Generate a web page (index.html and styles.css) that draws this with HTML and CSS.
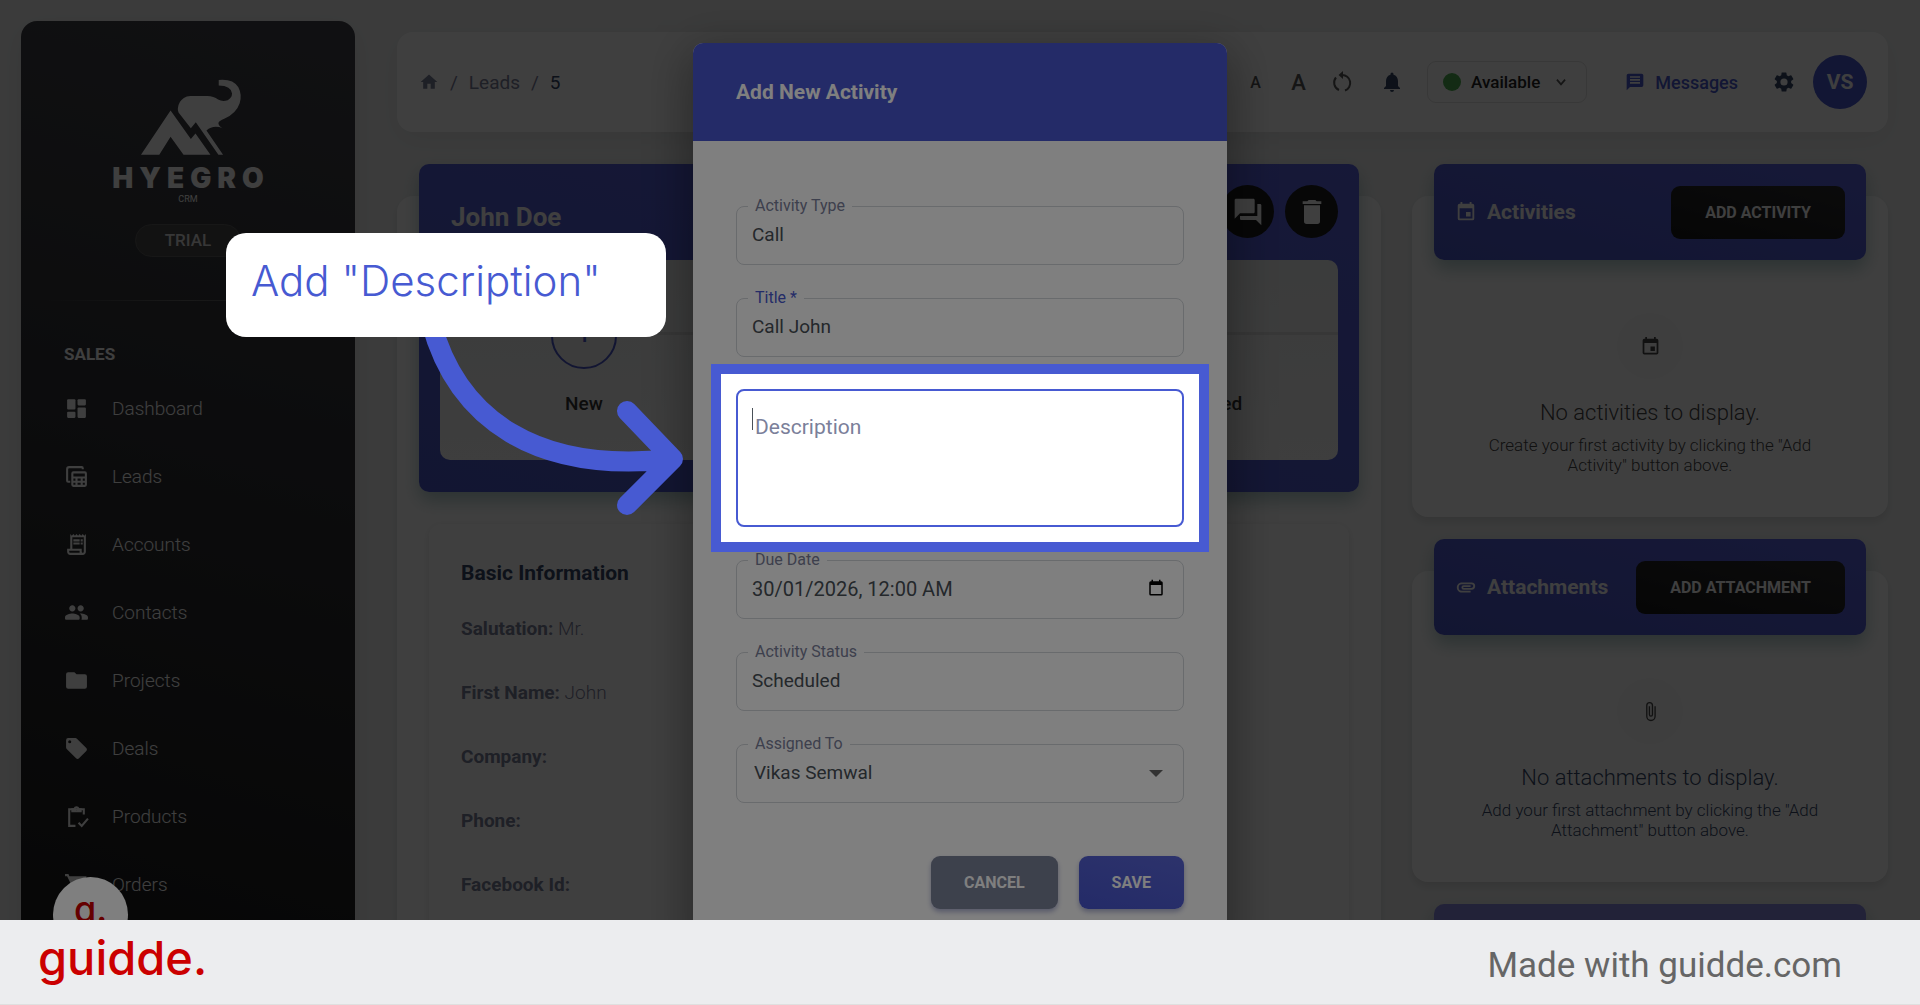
FILE: index.html
```html
<!DOCTYPE html>
<html lang="en">
<head>
  <meta charset="utf-8">
  <title>Add New Activity</title>
  <link rel="stylesheet" href="styles.css">
</head>
<body>
<svg class="sprite" aria-hidden="true">
  <symbol id="i-dashboard" viewBox="0 0 24 24"><rect x="3" y="3" width="8" height="10" rx="1"/><rect x="3" y="15" width="8" height="6" rx="1"/><rect x="13" y="3" width="8" height="6" rx="1"/><rect x="13" y="11" width="8" height="10" rx="1"/></symbol>
  <symbol id="i-table" viewBox="0 0 24 24"><path d="M18 5V4a1 1 0 0 0-1-1H5a2 2 0 0 0-2 2v11a1 1 0 0 0 1 1h2" fill="none" stroke="currentColor" stroke-width="2"/><path fill-rule="evenodd" d="M9 7h11a2 2 0 0 1 2 2v11a2 2 0 0 1-2 2H9a2 2 0 0 1-2-2V9a2 2 0 0 1 2-2zm0 2v3h11V9zm0 5v2h2v-2zm4 0v2h3v-2zm5 0v2h2v-2zM9 18v2h2v-2zm4 0v2h3v-2zm5 0v2h2v-2z"/></symbol>
  <symbol id="i-receipt" viewBox="0 0 24 24"><path d="M19.500 3.500 18 2l-1.500 1.500L15 2l-1.500 1.500L12 2l-1.500 1.500L9 2 7.500 3.500 6 2v14H3v3c0 1.660 1.340 3 3 3h12c1.660 0 3-1.340 3-3V2l-1.500 1.500zM15 20H6c-.55 0-1-.45-1-1v-1h10v2zm4-1c0 .55-.45 1-1 1s-1-.45-1-1v-3H8V5h11v14z"/><path d="M9 7h6v2H9zm7 0h2v2h-2zm-7 3h6v2H9zm7 0h2v2h-2z"/></symbol>
  <symbol id="i-people" viewBox="0 0 24 24"><path d="M16 11c1.660 0 2.990-1.340 2.990-3S17.660 5 16 5s-3 1.340-3 3 1.340 3 3 3zm-8 0c1.660 0 2.990-1.340 2.990-3S9.660 5 8 5 5 6.340 5 8s1.340 3 3 3zm0 2c-2.330 0-7 1.170-7 3.500V18a1 1 0 0 0 1 1h12a1 1 0 0 0 1-1v-1.500C15 14.170 10.330 13 8 13zm8 0c-.29 0-.62.020-.97.050 1.160.84 1.970 1.970 1.970 3.450V18l-.2 1H22a1 1 0 0 0 1-1v-1.500c0-2.330-4.670-3.500-7-3.500z"/></symbol>
  <symbol id="i-folder" viewBox="0 0 24 24"><path d="M10 4H4a2 2 0 0 0-2 2v12a2 2 0 0 0 2 2h16a2 2 0 0 0 2-2V8a2 2 0 0 0-2-2h-8z"/></symbol>
  <symbol id="i-tag" viewBox="0 0 24 24"><path d="m21.400 11.600-9-9C12.050 2.220 11.550 2 11 2H4a2 2 0 0 0-2 2v7c0 .55.220 1.050.590 1.420l9 9c.36.36.86.58 1.410.58s1.050-.22 1.410-.59l7-7c.37-.36.59-.86.59-1.410s-.23-1.060-.6-1.400zM5.500 7a1.500 1.500 0 1 1 0-3 1.500 1.500 0 0 1 0 3z"/></symbol>
  <symbol id="i-clipboard" viewBox="0 0 24 24"><path d="M11 21H5V5h14v5M14 18l3 3 6-7" fill="none" stroke="currentColor" stroke-width="2"/><path fill-rule="evenodd" d="M7 4h2.200a3 3 0 0 1 5.600 0H17v4H7zm5 0a1 1 0 1 0 0 2 1 1 0 0 0 0-2z"/></symbol>
  <symbol id="i-cart" viewBox="0 0 24 24"><path d="M7 18a2 2 0 1 0 0 4 2 2 0 0 0 0-4zM1 2v2h2l3.600 7.590-1.350 2.450C4.520 15.370 5.480 17 7 17h12v-2H7l1.100-2h7.450c.75 0 1.410-.41 1.750-1.030L21.700 4H5.210l-.94-2zm16 16a2 2 0 1 0 0 4 2 2 0 0 0 0-4z"/></symbol>
  <symbol id="i-home" viewBox="0 0 24 24"><path d="M10 20v-6h4v6h5v-8h3L12 3 2 12h3v8z"/></symbol>
  <symbol id="i-reset" viewBox="0 0 24 24"><path d="M9 20A8 8 0 0 1 6 7.500M15 20.500A8 8 0 0 0 12 5" fill="none" stroke="currentColor" stroke-width="2"/><path d="M13 1v8L8.500 5z"/></symbol>
  <symbol id="i-bell" viewBox="0 0 24 24"><path d="M12 22a2 2 0 0 0 2-2h-4a2 2 0 0 0 2 2zm6-6v-5c0-3.070-1.630-5.640-4.500-6.320V4a1.500 1.500 0 0 0-3 0v.68C7.640 5.360 6 7.920 6 11v5l-2 2v1h16v-1z"/></symbol>
  <symbol id="i-chevron" viewBox="0 0 24 24"><path d="m5 8 7 8 7-8" fill="none" stroke="currentColor" stroke-width="3"/></symbol>
  <symbol id="i-message" viewBox="0 0 24 24"><path fill-rule="evenodd" d="M20 2H4a2 2 0 0 0-2 2v18l4-4h14a2 2 0 0 0 2-2V4a2 2 0 0 0-2-2zM6 5h12v2H6zm0 3.500h12v2H6zM6 12h12v2H6z"/></symbol>
  <symbol id="i-gear" viewBox="0 0 24 24"><path d="M19.140 12.940c.04-.3.060-.61.060-.94 0-.32-.02-.64-.07-.94l2.030-1.580a.49.490 0 0 0 .12-.61l-1.920-3.320a.49.490 0 0 0-.59-.22l-2.390.960c-.5-.38-1.030-.7-1.620-.94l-.36-2.540a.48.480 0 0 0-.48-.41h-3.840c-.24 0-.43.170-.47.410l-.36 2.540c-.59.240-1.130.570-1.620.940l-2.390-.96c-.22-.08-.47 0-.59.220L2.740 8.870c-.12.210-.08.470.120.610l2.030 1.580c-.05.300-.09.630-.09.940s.02.640.070.940l-2.030 1.580a.49.490 0 0 0-.12.610l1.920 3.320c.12.220.370.290.590.220l2.390-.96c.5.380 1.030.700 1.620.940l.36 2.540c.05.240.240.410.480.410h3.840c.24 0 .44-.17.470-.41l.36-2.540c.59-.24 1.130-.56 1.620-.94l2.390.960c.22.080.470 0 .59-.22l1.920-3.320c.12-.22.070-.47-.12-.61zM12 15.600A3.600 3.600 0 1 1 12 8.400a3.600 3.600 0 0 1 0 7.200z"/></symbol>
  <symbol id="i-chat" viewBox="0 0 24 24"><path d="M21 6h-2v9H6v2c0 .55.450 1 1 1h11l4 4V7c0-.55-.45-1-1-1zm-4 6V3c0-.55-.45-1-1-1H3c-.55 0-1 .45-1 1v14l4-4h10c.55 0 1-.45 1-1z"/></symbol>
  <symbol id="i-trash" viewBox="0 0 24 24"><path d="M6 19a2 2 0 0 0 2 2h8a2 2 0 0 0 2-2V7H6zM19 4h-3.500l-1-1h-5l-1 1H5v2h14z"/></symbol>
  <symbol id="i-event" viewBox="0 0 24 24"><path d="M17 12h-5v5h5zM16 1v2H8V1H6v2H5a2 2 0 0 0-2 2v14a2 2 0 0 0 2 2h14a2 2 0 0 0 2-2V5a2 2 0 0 0-2-2h-1V1zm3 18H5V8h14z"/></symbol>
  <symbol id="i-clip" viewBox="0 0 24 24"><path d="M16.500 6v11.500a4 4 0 0 1-8 0V5a2.500 2.500 0 0 1 5 0v10.500a1 1 0 0 1-2 0V6H10v9.500a2.500 2.500 0 0 0 5 0V5a4 4 0 0 0-8 0v12.500a5.500 5.500 0 0 0 11 0V6z"/></symbol>
  <symbol id="i-clip-flat" viewBox="0 0 24 24"><path d="M2 12.500C2 9.460 4.460 7 7.500 7H18a4 4 0 0 1 0 8H9.500a2.500 2.500 0 0 1 0-5H17v2H9.410c-.55 0-.55 1 0 1H18a2 2 0 0 0 0-4H7.500a3.500 3.500 0 0 0 0 7H17v2H7.500C4.460 18 2 15.540 2 12.500z"/></symbol>
  <symbol id="i-calendar" viewBox="0 0 24 24"><path fill-rule="evenodd" d="M19 3h-1V1h-2v2H8V1H6v2H5a2 2 0 0 0-2 2v15a2 2 0 0 0 2 2h14a2 2 0 0 0 2-2V5a2 2 0 0 0-2-2zM5 8h14v12H5z"/></symbol>
</svg>

<div class="stage">
  <div class="app">
    <aside class="sidebar">
      <div class="brand">
        <svg class="brand-mark" viewBox="420 235 310 233"><path d="M423 465 512 332 573 418 587 401 632 465H551L512 411 478 465z"/><path d="M534 325Q536 304 552 294 560 288 572 288H622Q642 288 655 299 668 306 684 301 697 294 697 281 695 258 657 257V240Q700 236 716 262 728 285 720 310 710 340 675 356 656 364 656 370 657 379 669 385 640 374 620 392L670 465H656L588 367 573 385 536 338Q533 332 534 325z"/></svg>
        <div class="brand-name">HYEGRO</div>
        <div class="brand-sub">CRM</div>
      </div>
      <div class="plan">TRIAL</div>
      <hr class="side-line">
      <h2 class="side-title">SALES</h2>
      <nav class="side-nav">
        <a href="#"><svg><use href="#i-dashboard"/></svg>Dashboard</a>
        <a href="#"><svg><use href="#i-table"/></svg>Leads</a>
        <a href="#"><svg><use href="#i-receipt"/></svg>Accounts</a>
        <a href="#"><svg><use href="#i-people"/></svg>Contacts</a>
        <a href="#"><svg><use href="#i-folder"/></svg>Projects</a>
        <a href="#"><svg><use href="#i-tag"/></svg>Deals</a>
        <a href="#"><svg><use href="#i-clipboard"/></svg>Products</a>
        <a href="#"><svg><use href="#i-cart"/></svg>Orders</a>
      </nav>
    </aside>

    <main class="main">
      <header class="navbar">
        <nav class="crumbs">
          <a href="#" aria-label="Home"><svg><use href="#i-home"/></svg></a>
          <span>/</span>
          <a href="#">Leads</a>
          <span>/</span>
          <span class="crumb-current">5</span>
        </nav>
        <div class="tools">
          <button class="tool font-small">A</button>
          <button class="tool font-large">A</button>
          <button class="tool" aria-label="Reset"><svg><use href="#i-reset"/></svg></button>
          <button class="tool bell" aria-label="Notifications"><svg><use href="#i-bell"/></svg></button>
          <button class="status"><i class="dot"></i>Available<svg><use href="#i-chevron"/></svg></button>
          <a class="messages" href="#"><svg><use href="#i-message"/></svg>Messages</a>
          <button class="tool gear" aria-label="Settings"><svg><use href="#i-gear"/></svg></button>
          <span class="avatar">VS</span>
        </div>
      </header>

      <div class="columns">
        <section class="panel lead">
          <div class="lead-head">
            <div class="lead-top">
              <h1>John Doe</h1>
              <button class="round" aria-label="Comments"><svg><use href="#i-chat"/></svg></button>
              <button class="round" aria-label="Delete"><svg><use href="#i-trash"/></svg></button>
            </div>
            <ol class="steps">
              <li><b>1</b>New</li>
              <li><b>2</b>Qualified</li>
              <li><b>3</b>Unqualified</li>
            </ol>
          </div>
          <div class="info">
            <h2>Basic Information</h2>
            <p><b>Salutation:</b> Mr.</p>
            <p><b>First Name:</b> John</p>
            <p><b>Company:</b></p>
            <p><b>Phone:</b></p>
            <p><b>Facebook Id:</b></p>
          </div>
        </section>

        <div class="side-col">
          <section class="panel">
            <div class="panel-head">
              <svg><use href="#i-event"/></svg>
              <h2>Activities</h2>
              <button class="dark-btn">ADD ACTIVITY</button>
            </div>
            <div class="empty empty-tall">
              <span class="empty-icon"><svg><use href="#i-event"/></svg></span>
              <h3>No activities to display.</h3>
              <p>Create your first activity by clicking the "Add Activity" button above.</p>
            </div>
          </section>
          <section class="panel">
            <div class="panel-head">
              <svg><use href="#i-clip-flat"/></svg>
              <h2>Attachments</h2>
              <button class="dark-btn">ADD ATTACHMENT</button>
            </div>
            <div class="empty empty-navy">
              <span class="empty-icon"><svg><use href="#i-clip"/></svg></span>
              <h3>No attachments to display.</h3>
              <p>Add your first attachment by clicking the "Add Attachment" button above.</p>
            </div>
          </section>
          <section class="panel">
            <div class="panel-head panel-head-light"></div>
          </section>
        </div>
      </div>
    </main>
  </div>

  <div class="backdrop"></div>
  <div class="bubble">g.</div>

  <div class="modal-wrap">
    <div class="modal" role="dialog" aria-labelledby="modalTitle">
      <h2 class="modal-head" id="modalTitle">Add New Activity</h2>
      <form class="form">
        <fieldset class="field">
          <legend><label for="type">Activity Type</label></legend>
          <input id="type" type="text" value="Call">
        </fieldset>
        <fieldset class="field">
          <legend><label class="active" for="title">Title *</label></legend>
          <input id="title" type="text" value="Call John">
        </fieldset>
        <div class="desc">
          <textarea id="description"></textarea>
          <label for="description">Description</label>
          <i class="caret"></i>
          <div class="spotlight"></div>
        </div>
        <fieldset class="field date">
          <legend><label for="due">Due Date</label></legend>
          <input id="due" type="text" value="30/01/2026, 12:00 AM">
          <svg><use href="#i-calendar"/></svg>
        </fieldset>
        <fieldset class="field">
          <legend><label for="status">Activity Status</label></legend>
          <input id="status" type="text" value="Scheduled">
        </fieldset>
        <fieldset class="field assigned">
          <legend><label for="assigned">Assigned To</label></legend>
          <select id="assigned"><option>Vikas Semwal</option></select>
          <svg viewBox="0 0 14 7"><path d="M0 0h14L7 7z"/></svg>
        </fieldset>
        <div class="actions">
          <button type="button" class="btn btn-cancel">CANCEL</button>
          <button type="button" class="btn btn-save">SAVE</button>
        </div>
      </form>
    </div>
  </div>

  <!-- curved pointer from the callout to the highlighted field -->
  <svg class="arrow" viewBox="420 320 280 210"><path d="M431 322C457 420 537 474 672 459M627 411 673 459 627 505"/></svg>
  <div class="callout">Add "Description"</div>
</div>

<footer class="footer">
  <a class="logo" href="#">guidde.</a>
  <span class="made">Made with guidde.com</span>
</footer>
</body>
</html>
```

FILE: styles.css
```css
* {
  box-sizing: border-box;
}
body {
  margin: 0;
  height: 100vh;
  display: flex;
  flex-direction: column;
  overflow: hidden;
  font-family: Roboto, "Liberation Sans", sans-serif;
  color: #344767;
}
h1, h2, h3, p, ol, fieldset {
  margin: 0;
  padding: 0;
}
button, input, select, textarea {
  font-family: inherit;
  border: 0;
  padding: 0;
  background: none;
}
a {
  color: inherit;
  text-decoration: none;
}
svg {
  fill: currentColor;
  flex-shrink: 0;
}
.sprite {
  display: none;
}
.stage {
  position: relative;
  flex: 1;
  min-height: 0;
  overflow: hidden;
  background: #eeefef;
}
.app {
  display: flex;
  gap: 42px;
  padding: 21px 32px 0 21px;
}

/* sidebar */
.sidebar {
  width: 334px;
  flex-shrink: 0;
  height: 1100px;
  border-radius: 16px;
  background: linear-gradient(195deg, #42434a, #191919 90%);
  color: #fff;
  display: flex;
  flex-direction: column;
  box-shadow: 0 8px 28px rgba(0, 0, 0, 0.08);
}
.brand {
  margin-top: 57px;
  display: flex;
  flex-direction: column;
  align-items: center;
}
.brand-mark {
  width: 103px;
  height: 78px;
  margin-left: 6px;
}
.brand-name {
  margin-top: 6px;
  padding-left: 6px;
  font: 900 28px/32px Inter, sans-serif;
  letter-spacing: 6px;
}
.brand-sub {
  font-size: 9px;
  line-height: 10px;
}
.plan {
  align-self: center;
  margin-top: 20px;
  width: 106px;
  height: 33px;
  border: 1px solid #5c5c5c;
  border-radius: 17px;
  background: #4a4a4a;
  font-size: 17px;
  font-weight: 500;
  line-height: 31px;
  text-align: center;
  color: #ddd;
}
.side-line {
  width: 290px;
  height: 1px;
  margin: 43px auto 0;
  border: 0;
  background: linear-gradient(90deg, transparent, #666, transparent);
}
.side-title {
  margin: 42px 0 0 43px;
  font-size: 17px;
  line-height: 22px;
}
.side-nav {
  margin-top: 9px;
}
.side-nav a {
  display: flex;
  align-items: center;
  gap: 23px;
  height: 68px;
  padding-left: 43px;
  font-size: 19px;
  font-weight: 300;
}
.side-nav svg {
  width: 25px;
  height: 25px;
}

/* top bar */
.main {
  flex: 1;
  min-width: 0;
  padding-top: 11px;
}
.navbar {
  display: flex;
  align-items: center;
  justify-content: space-between;
  height: 100px;
  padding: 0 21px 0 22px;
  border-radius: 16px;
  background: #fff;
  box-shadow: 0 8px 28px rgba(0, 0, 0, 0.06);
}
.crumbs {
  display: flex;
  align-items: center;
  gap: 11px;
  font-size: 19px;
  color: #7b809a;
}
.crumbs svg {
  display: block;
  width: 20px;
  height: 20px;
}
.crumb-current {
  color: #344767;
}
.tools {
  display: flex;
  align-items: center;
}
.tool {
  width: 43px;
  color: #555;
  font-weight: 500;
}
.tool svg {
  display: block;
  margin: auto;
  width: 24px;
  height: 24px;
}
.font-small {
  font-size: 16px;
}
.font-large {
  font-size: 22px;
}
.bell {
  width: 58px;
  color: #344767;
}
.status {
  display: flex;
  align-items: center;
  gap: 10px;
  height: 42px;
  margin: 0 38px 0 6px;
  padding: 0 18px 0 15px;
  border: 1px solid #e0e0e0;
  border-radius: 9px;
  font-size: 17px;
  font-weight: 500;
  color: #222;
}
.status svg {
  width: 14px;
  height: 14px;
  margin-left: 4px;
  color: #555;
}
.dot {
  width: 18px;
  height: 18px;
  border-radius: 50%;
  background: #4caf50;
}
.messages {
  display: flex;
  align-items: center;
  gap: 10px;
  font-size: 18px;
  font-weight: 500;
  color: #4a5ad0;
}
.messages svg {
  width: 20px;
  height: 20px;
}
.gear {
  width: 24px;
  margin: 0 17px 0 34px;
  color: #344767;
}
.avatar {
  width: 54px;
  height: 54px;
  border-radius: 50%;
  background: #4858d0;
  color: #fff;
  font-size: 21px;
  font-weight: 700;
  line-height: 54px;
  text-align: center;
}

/* record page */
.columns {
  display: grid;
  grid-template-columns: minmax(0, 1fr) 476px;
  gap: 31px;
  margin-top: 64px;
}
.panel {
  padding: 0 22px;
  border-radius: 16px;
  background: #fff;
  box-shadow: 0 5px 8px rgba(0, 0, 0, 0.1);
}
.lead {
  height: 1000px;
}
.lead-head {
  margin-top: -32px;
  padding: 21px;
  padding-bottom: 32px;
  border-radius: 10px;
  background: linear-gradient(195deg, #5a62e0, #4a57c8);
  box-shadow: 0 9px 18px rgba(0, 90, 90, 0.3);
}
.lead-top {
  display: flex;
  align-items: center;
  gap: 11px;
}
.lead-top h1 {
  flex: 1;
  padding: 10px 0 0 11px;
  font-size: 26px;
  color: #fff;
}
.round {
  width: 53px;
  height: 53px;
  border-radius: 50%;
  background: #1c1c1c;
  color: #fff;
}
.round svg {
  display: block;
  margin: auto;
  width: 32px;
  height: 32px;
}
.steps {
  display: flex;
  gap: 17px;
  height: 200px;
  margin-top: 22px;
  padding-top: 43px;
  border-radius: 10px;
  background: linear-gradient(#eef0f0, #f8f8f8);
  list-style: none;
}
.steps li {
  flex: 1;
  display: flex;
  flex-direction: column;
  align-items: center;
  gap: 23px;
  font-size: 19px;
  font-weight: 500;
  color: #333;
  background: linear-gradient(#dedede, #dedede) 0 29px / 100% 3px no-repeat;
}
.steps b {
  width: 66px;
  height: 66px;
  border: 2px solid #4a57c8;
  border-radius: 50%;
  background: #f2f2f2;
  font-size: 19px;
  line-height: 62px;
  text-align: center;
  color: #4a57c8;
}
.info {
  margin: 32px 10px 0;
  padding: 37px 32px;
  border-radius: 12px;
  background: #fff;
  height: 700px;
  box-shadow: 0 2px 8px rgba(0, 0, 0, 0.12);
}
.info h2 {
  margin-bottom: 11px;
  font-size: 21px;
  line-height: 25px;
}
.info p {
  font-size: 19px;
  font-weight: 300;
  line-height: 64px;
  color: #7b809a;
}
.info b {
  font-weight: 700;
}
.side-col {
  display: flex;
  flex-direction: column;
  gap: 54px;
}
.panel-head {
  display: flex;
  align-items: center;
  gap: 10px;
  height: 96px;
  margin-top: -32px;
  padding: 0 21px;
  border-radius: 10px;
  background: linear-gradient(195deg, #5a62e0, #4a57c8);
  color: #fff;
  box-shadow: 0 9px 18px rgba(0, 90, 90, 0.3);
}
.panel-head-light {
  background: #8888e0;
}
.panel-head svg {
  width: 22px;
  height: 22px;
}
.panel-head h2 {
  flex: 1;
  font-size: 21px;
}
.dark-btn {
  height: 53px;
  padding: 0 34px;
  border-radius: 9px;
  background: linear-gradient(195deg, #2c2c2e, #191919);
  color: #fff;
  font-size: 16px;
  font-weight: 700;
}
.empty {
  display: flex;
  flex-direction: column;
  align-items: center;
  padding: 43px 32px 42px;
  text-align: center;
  font-weight: 300;
  color: #444;
}
.empty-tall {
  padding-top: 53px;
}
.empty-navy {
  color: #344767;
}
.empty-icon {
  display: flex;
  align-items: center;
  justify-content: center;
  width: 66px;
  height: 66px;
  border-radius: 50%;
  background: #f8f8f8;
  color: #444;
}
.empty-icon svg {
  width: 21px;
  height: 21px;
}
.empty h3 {
  margin-top: 20px;
  font-size: 22px;
  font-weight: 300;
  line-height: 28px;
}
.empty p {
  margin-top: 8px;
  font-size: 17px;
  line-height: 20px;
}

/* activity dialog */
.backdrop {
  position: absolute;
  inset: 0;
  background: rgba(0, 0, 0, 0.5);
}
.bubble {
  position: absolute;
  left: 53px;
  top: 877px;
  width: 75px;
  height: 75px;
  border-radius: 50%;
  background: #fff;
  font: 500 36px/64px Inter, sans-serif;
  text-align: center;
  color: #cb0000;
}
.modal-wrap {
  position: absolute;
  inset: 0;
  display: flex;
  align-items: flex-start;
  justify-content: center;
  padding-top: 43px;
}
.modal {
  width: 534px;
  border-radius: 10px;
  background: #fff;
  box-shadow: 0 24px 38px 3px rgba(0, 0, 0, 0.14), 0 9px 46px 8px rgba(0, 0, 0, 0.2);
}
.modal-head {
  height: 98px;
  padding-left: 43px;
  border-radius: 10px 10px 0 0;
  background: #4856d0;
  color: #fff;
  font-size: 21px;
  line-height: 98px;
}
.form {
  display: flex;
  flex-direction: column;
  gap: 23px;
  padding: 55px 43px 43px;
}
.field {
  position: relative;
  min-width: 0;
  height: 69px;
  border: 1px solid #d2d6da;
  border-radius: 8px;
}
.field legend {
  height: 20px;
  margin-left: 11px;
  padding: 0 7px;
  font-size: 16px;
  line-height: 20px;
  color: #7b809a;
}
.field label {
  display: block;
}
.field .active {
  color: #4858d0;
}
.field input,
.field select {
  display: block;
  width: 100%;
  height: 37px;
  padding: 0 15px;
  font-size: 19px;
  color: #495057;
  appearance: none;
}
.field.date input {
  font-size: 20px;
}
.field select {
  padding-left: 17px;
}
.field svg {
  position: absolute;
  right: 18px;
  top: 9px;
  width: 18px;
  height: 18px;
  color: #000;
}
.field.assigned svg {
  top: 16px;
  right: 20px;
  width: 14px;
  height: 7px;
  color: #666;
}
.desc {
  position: relative;
  height: 138px;
  margin-top: 9px;
}
.desc textarea {
  display: block;
  width: 100%;
  height: 100%;
  padding: 18px 15px;
  border: 2px solid #475ad2;
  border-radius: 8px;
  resize: none;
  outline: 0;
}
.desc label {
  position: absolute;
  left: 19px;
  top: 25px;
  font-size: 21px;
  line-height: 26px;
  color: #7b809a;
}
.caret {
  position: absolute;
  left: 16px;
  top: 19px;
  width: 1px;
  height: 22px;
  background: #495057;
}
/* frame round the field, its shadow dims the rest of the stage */
.spotlight {
  position: absolute;
  inset: -25px;
  z-index: 1;
  border: 10px solid #475ad2;
  box-shadow: 0 0 0 3000px rgba(0, 0, 0, 0.5);
  pointer-events: none;
}
.actions {
  display: flex;
  justify-content: flex-end;
  gap: 21px;
  margin-top: 30px;
}
.btn {
  height: 53px;
  padding: 0 33px;
  border-radius: 9px;
  color: #fff;
  font-size: 16px;
  font-weight: 700;
  box-shadow: 0 3px 5px rgba(60, 70, 150, 0.4);
}
.btn-cancel {
  background: #7b8299;
}
.btn-save {
  background: linear-gradient(195deg, #5a66d8, #4856d0);
}

/* guide layer */
.arrow {
  position: absolute;
  z-index: 2;
  left: 420px;
  top: 320px;
  width: 280px;
  height: 210px;
}
.arrow path {
  fill: none;
  stroke: #475ad2;
  stroke-width: 20;
  stroke-linecap: round;
  stroke-linejoin: round;
}
.callout {
  position: absolute;
  z-index: 2;
  left: 226px;
  top: 233px;
  width: 440px;
  height: 104px;
  padding-left: 25px;
  border-radius: 20px;
  background: #fff;
  color: #475ad2;
  font: 300 42px/96px Inter, sans-serif;
}
.footer {
  display: flex;
  align-items: center;
  justify-content: space-between;
  height: 85px;
  padding: 0 78px 0 38px;
  border-bottom: 1px solid #dfdfdf;
  background: #ecedef;
}
.logo {
  padding-bottom: 8px;
  font: 500 47px/60px Inter, sans-serif;
  color: #cb0000;
}
.made {
  padding-top: 7px;
  font-size: 35px;
  color: #666;
}
```
